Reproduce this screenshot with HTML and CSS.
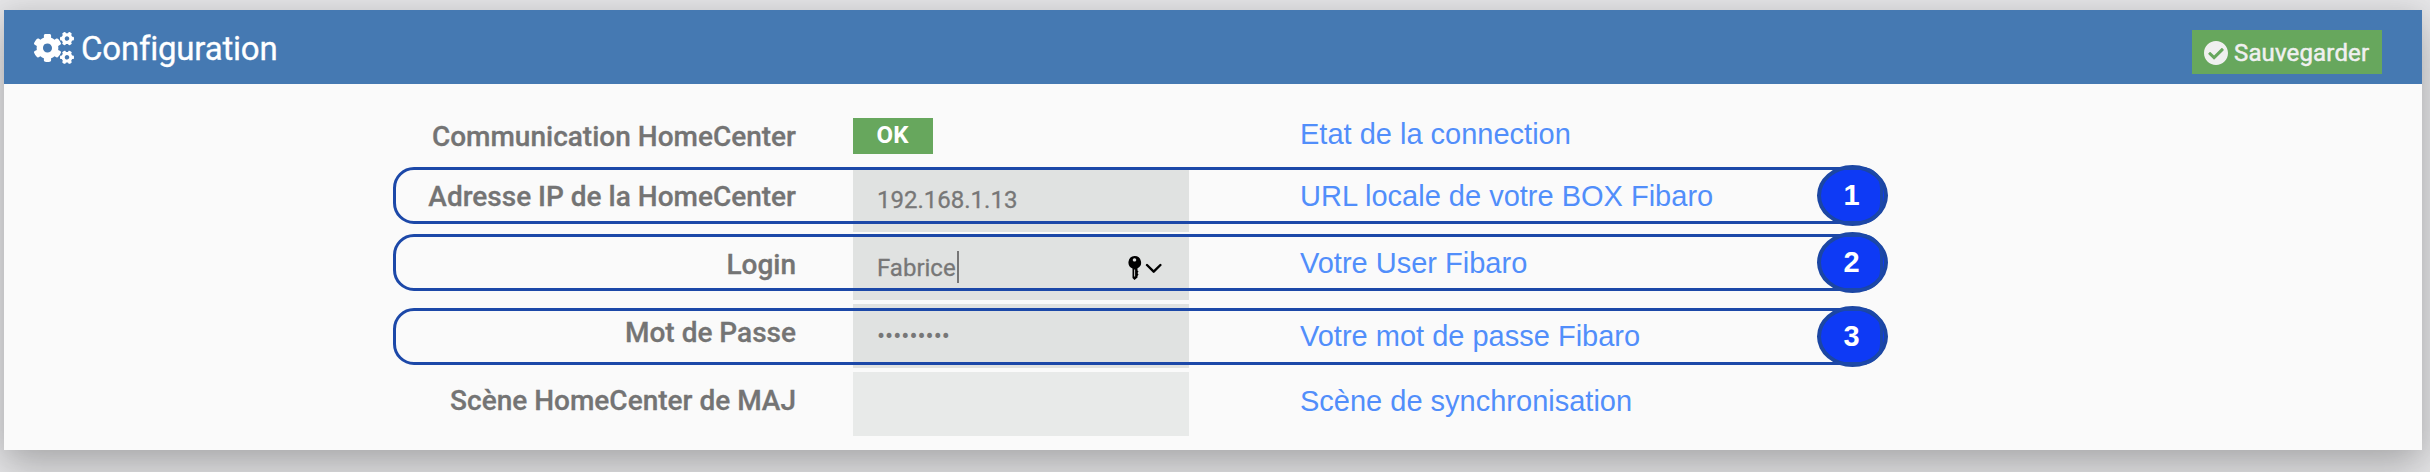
FILE: index.html
```html
<!DOCTYPE html>
<html lang="fr">
<head>
<meta charset="utf-8">
<title>Configuration</title>
<link rel="stylesheet" href="styles.css">
</head>
<body>
<main class="card">
  <header class="head">
    <h1 class="title">
      <svg class="cogs" viewBox="0 0 640 512" fill="currentColor">
        <defs><path id="cog" d="M512.1 191l-8.2 14.3c-3 5.3-9.4 7.5-15.1 5.4-11.8-4.4-22.6-10.7-32.1-18.6-4.6-3.8-5.8-10.5-2.8-15.7l8.2-14.3c-6.9-8-12.3-17.3-15.9-27.4h-16.5c-6 0-11.2-4.3-12.2-10.3-2-12-2.1-24.6 0-37.1 1-6 6.2-10.4 12.2-10.4h16.5c3.6-10.1 9-19.4 15.9-27.4l-8.2-14.3c-3-5.2-1.9-11.9 2.8-15.7 9.5-7.9 20.4-14.2 32.1-18.6 5.7-2.1 12.1.1 15.1 5.4l8.2 14.3c10.5-1.9 21.2-1.9 31.7 0L552 6.3c3-5.3 9.4-7.5 15.1-5.4 11.8 4.4 22.6 10.7 32.1 18.6 4.6 3.8 5.8 10.5 2.8 15.7l-8.2 14.3c6.9 8 12.3 17.3 15.9 27.4h16.5c6 0 11.2 4.3 12.2 10.3 2 12 2.1 24.6 0 37.1-1 6-6.2 10.4-12.2 10.4h-16.5c-3.6 10.1-9 19.4-15.9 27.4l8.2 14.3c3 5.2 1.9 11.9-2.8 15.7-9.5 7.9-20.4 14.2-32.1 18.6-5.7 2.1-12.1-.1-15.1-5.4l-8.2-14.3c-10.4 1.9-21.2 1.9-31.7 0zm-10.5-58.8c38.5 29.6 82.4-14.3 52.8-52.8-38.5-29.7-82.4 14.3-52.8 52.8z"/></defs>
        <use href="#cog"/>
        <use href="#cog" y="298.9"/>
        <path d="M386.3 286.1l33.7 16.8c10.1 5.8 14.5 18.1 10.5 29.1-8.9 24.2-26.4 46.4-42.6 65.8-7.4 8.9-20.2 11.1-30.3 5.3l-29.1-16.8c-16 13.7-34.6 24.6-54.9 31.7v33.6c0 11.6-8.3 21.6-19.7 23.6-24.6 4.2-50.4 4.4-75.9 0-11.5-2-20-11.9-20-23.6V418c-20.3-7.2-38.9-18-54.9-31.7L74 403c-10 5.8-22.9 3.6-30.3-5.3-16.2-19.4-33.3-41.6-42.2-65.7-4-10.9.4-23.2 10.5-29.1l33.3-16.8c-3.9-20.9-3.9-42.4 0-63.4L12 205.8c-10.1-5.8-14.6-18.1-10.5-29 8.9-24.2 26-46.4 42.2-65.8 7.4-8.9 20.2-11.1 30.3-5.3l29.1 16.8c16-13.7 34.6-24.6 54.9-31.7V57.1c0-11.5 8.2-21.5 19.6-23.5 24.6-4.2 50.5-4.4 76-.1 11.5 2 20 11.9 20 23.6v33.6c20.3 7.2 38.9 18 54.9 31.7l29.1-16.8c10-5.8 22.9-3.6 30.3 5.3 16.2 19.4 33.2 41.6 42.1 65.8 4 10.9.1 23.2-10 29.1l-33.7 16.8c3.9 21 3.9 42.5 0 63.5zm-117.6 21.1c59.2-77-28.7-164.9-105.7-105.7-59.2 77 28.7 164.9 105.7 105.7z"/>
      </svg>
      <span class="title-text">Configuration</span>
    </h1>
    <div class="save">
      <svg class="check" viewBox="8 8 496 496" fill="currentColor"><path d="M504 256c0 136.967-111.033 248-248 248S8 392.967 8 256 119.033 8 256 8s248 111.033 248 248zM227.314 387.314l184-184c6.248-6.248 6.248-16.379 0-22.627l-22.627-22.627c-6.248-6.249-16.379-6.249-22.628 0L216 308.118l-70.059-70.059c-6.248-6.248-16.379-6.248-22.628 0l-22.627 22.627c-6.248 6.248-6.248 16.379 0 22.627l104 104c6.249 6.249 16.379 6.249 22.628.001z"/></svg>
      <span class="save-text">Sauvegarder</span>
    </div>
  </header>
  <section class="rows">
    <div class="row state">
      <div class="label">Communication HomeCenter</div>
      <div class="ok">OK</div>
      <div class="note">Etat de la connection</div>
    </div>
    <div class="row address">
      <div class="label">Adresse IP de la HomeCenter</div>
      <div class="field"><span class="ip">192.168.1.13</span></div>
      <div class="note">URL locale de votre BOX Fibaro</div>
      <div class="badge">1</div>
      <div class="frame"></div>
    </div>
    <div class="row login">
      <div class="label">Login</div>
      <div class="field"><span class="user">Fabrice</span><i class="caret"></i>
        <svg class="key" viewBox="0 0 34 24">
          <path fill-rule="evenodd" d="M6.5 0a6.5 6.5 0 0 1 3 12.3V14.5l1 1-1 1.500 1 1.500-1 1.500v1.500l-3 2.500-2-2V12.500A6.500 6.500 0 0 1 6.500 0zM6.500 2.200a1.700 1.700 0 1 0 .01 0zM6.200 13.500v7h.9v-7z"/>
          <path d="M19 9l6.700 6.700L32.400 9" fill="none" stroke="#000" stroke-width="2.400" stroke-linecap="round" stroke-linejoin="round"/>
        </svg>
      </div>
      <div class="note">Votre User Fibaro</div>
      <div class="badge">2</div>
      <div class="frame"></div>
    </div>
    <div class="row secret">
      <div class="label">Mot de Passe</div>
      <div class="field"><span class="dots">•••••••••</span></div>
      <div class="note">Votre mot de passe Fibaro</div>
      <div class="badge">3</div>
      <div class="frame"></div>
    </div>
    <div class="row scene">
      <div class="label">Scène HomeCenter de MAJ</div>
      <div class="field light"></div>
      <div class="note">Scène de synchronisation</div>
    </div>
  </section>
</main>
</body>
</html>
```
FILE: styles.css
```css
* { box-sizing: border-box; }
body {
  margin: 0;
  padding: 10px 8px 22px 4px;
  height: 472px;
  overflow: hidden;
  background: #e5e5e7;
  font-family: Roboto, sans-serif;
}
.card {
  height: 440px;
  background: #fafafa;
  box-shadow: 0 20px 40px rgba(0, 0, 0, .22), 0 0 24px rgba(0, 0, 0, .08);
}
.head {
  height: 74px;
  padding: 0 40px 0 30px;
  display: flex;
  justify-content: space-between;
  background: #4579b2;
  color: #fff;
}
.title {
  margin: 0;
  display: flex;
  gap: 7px;
  font-size: 33px;
  font-weight: 400;
  line-height: 38px;
  letter-spacing: -.2px;
  padding-top: 20px;
}
.title-text { -webkit-text-stroke: .3px; }
.cogs { width: 40px; height: 32px; margin-top: 2px; }
.save {
  width: 190px;
  height: 44px;
  margin-top: 20px;
  padding: 0 12px;
  display: flex;
  gap: 6px;
  align-items: center;
  background: #67a75d;
  color: #f0f0f0;
  font-size: 24px;
  line-height: 44px;
}
.check { width: 24px; height: 24px; flex: none; margin-top: 1px; }
.save-text { padding-top: 2px; letter-spacing: .15px; -webkit-text-stroke: .5px; }
.rows {
  padding-top: 16px;
  display: grid;
  grid-template-rows: repeat(5, 68px);
}
.row {
  position: relative;
  display: grid;
  grid-template-columns: 792px 393px 1fr;
  align-items: start;
}
.label {
  text-align: right;
  font-size: 28px;
  font-weight: 500;
  line-height: 30px;
  color: #747474;
  padding-top: var(--label);
  -webkit-text-stroke: .3px;
}
.field, .ok { margin-left: 57px; }
.field {
  width: 336px;
  height: 64px;
  display: flex;
  padding: 9px 24px 0;
  background: #e0e2e1;
  color: #777;
  font-size: 24px;
  line-height: 47px;
}
.light { background: #e8eae9; }
.ok {
  width: 80px;
  height: 36px;
  margin-top: 18px;
  padding-right: 1px;
  background: #67a75d;
  color: #fff;
  font-size: 24px;
  font-weight: 700;
  line-height: 35px;
  text-align: center;
}
.note {
  padding-left: 111px;
  padding-top: var(--note);
  font-family: "Liberation Sans", Arial, sans-serif;
  font-size: 29px;
  line-height: 34px;
  color: #518efa;
  white-space: nowrap;
}
.state { --label: 22px; --note: 17px; }
.address { --label: 14px; --note: 11px; --frame: -1px; }
.login { --label: 14px; --note: 10px; --frame: -2px; }
.secret { --label: 14px; --note: 15px; --frame: 4px; }
.scene { --label: 14px; --note: 12px; }
.ip, .user { -webkit-text-stroke: .3px; }
.caret { width: 2px; height: 32px; margin: 6px 0 0 1px; background: #777; }
.key { width: 34px; height: 24px; margin: 11px 3px 0 auto; }
.badge {
  position: absolute;
  left: 1813px;
  top: calc(var(--frame) - 2px);
  width: 71px;
  height: 61px;
  padding-right: 2px;
  border: 4px solid #1b46a3;
  border-radius: 50%;
  background: #0e3af5;
  color: #fff;
  font: 700 29px/53px "Liberation Sans", Arial, sans-serif;
  text-align: center;
}
.frame {
  position: absolute;
  left: 389px;
  top: var(--frame);
  width: 1490px;
  height: 57px;
  border: 3px solid #1c48a8;
  border-radius: 21px;
}
```
